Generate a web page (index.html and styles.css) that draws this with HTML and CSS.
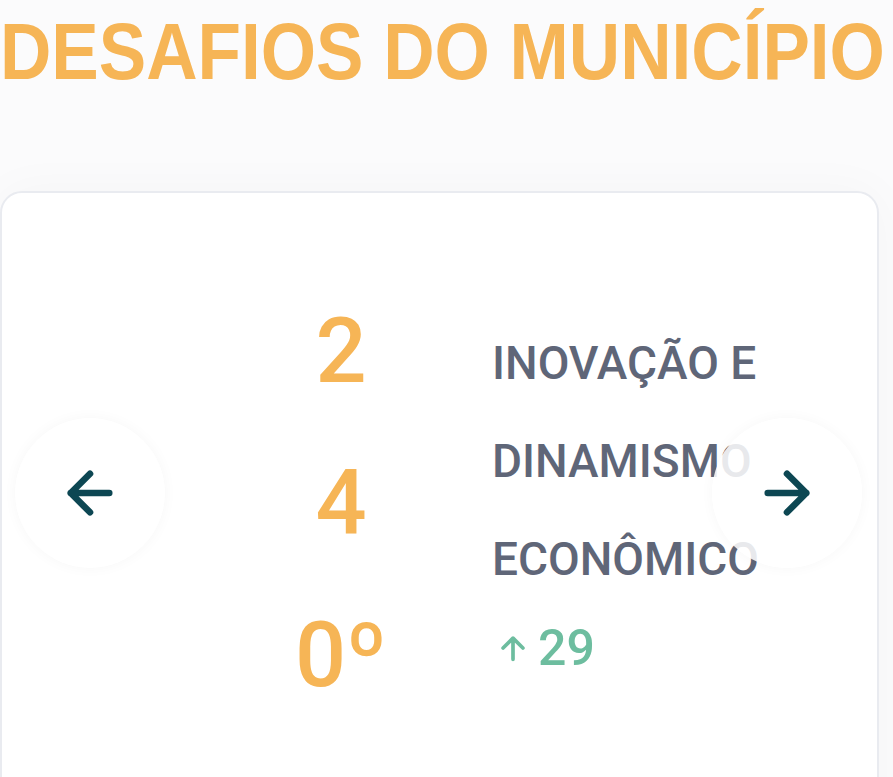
FILE: index.html
```html
<!DOCTYPE html>
<html lang="pt-BR">
<head>
    <meta charset="UTF-8">
    <meta name="viewport" content="width=device-width, initial-scale=1.0">
    <title>Desafios do Município</title>
    <link rel="stylesheet" href="styles.css">
</head>
<body>
    <h1 class="page-title"><span>DESAFIOS DO MUNICÍPIO</span></h1>

    <div class="challenge-card">
        <button class="nav-btn nav-prev" aria-label="Anterior">
            <svg viewBox="0 0 24 24" fill="none">
                <path d="M19 12H5M12 19l-7-7 7-7" stroke="#0d4753" stroke-width="2.4" stroke-linecap="round" stroke-linejoin="round"/>
            </svg>
        </button>

        <div class="challenge">
            <div class="rank">
                <span>2</span>
                <span>4</span>
                <span>0º</span>
            </div>
            <div class="info">
                <p class="name">INOVAÇÃO E DINAMISMO ECONÔMICO</p>
                <p class="change">
                    <svg viewBox="0 0 24 24" fill="none">
                        <path d="M12 20V5M5 12l7-7 7 7" stroke="#6dbd9f" stroke-width="2.6" stroke-linecap="round" stroke-linejoin="round"/>
                    </svg>
                    29
                </p>
            </div>
        </div>

        <button class="nav-btn nav-next" aria-label="Próximo">
            <svg viewBox="0 0 24 24" fill="none">
                <path d="M5 12h14M12 5l7 7-7 7" stroke="#0d4753" stroke-width="2.4" stroke-linecap="round" stroke-linejoin="round"/>
            </svg>
        </button>
    </div>
</body>
</html>
```

FILE: styles.css
```css
:root {
    --orange: #f6b556;
    --slate: #5f6678;
    --green: #6dbd9f;
    --teal: #0d4753;
    --border: #e9ebf0;
}

* {
    margin: 0;
    padding: 0;
    box-sizing: border-box;
}

html, body {
    height: 777px;
    overflow: hidden;
}

body {
    font-family: Roboto, 'Liberation Sans', sans-serif;
    background: #fbfbfc;
}

.page-title {
    font-family: 'Liberation Sans', Arial, sans-serif;
    font-weight: 700;
    font-size: 79px;
    line-height: 1;
    color: var(--orange);
    padding-top: 12px;
    white-space: nowrap;
    margin-bottom: 100px;
}

.page-title span {
    display: inline-block;
    transform: scaleX(0.9);
    transform-origin: left center;
}

.challenge-card {
    position: relative;
    width: 879px;
    height: 700px;
    background: #fff;
    border: 2px solid var(--border);
    border-radius: 22px;
    box-shadow: 0 0 50px rgba(0, 0, 0, 0.03);
}

.challenge {
    display: flex;
    align-items: flex-start;
    padding-top: 83px;
    padding-left: 294px;
}

.rank {
    display: flex;
    flex-direction: column;
    align-items: center;
    width: 90px;
    font-size: 90px;
    font-weight: 500;
    line-height: 152px;
    color: var(--orange);
}

.info {
    margin-left: 106px;
    margin-top: 38px;
}

.name {
    width: 280px;
    font-size: 46px;
    font-weight: 500;
    line-height: 98px;
    color: var(--slate);
}

.change {
    display: flex;
    align-items: center;
    gap: 8px;
    font-size: 50px;
    font-weight: 500;
    color: var(--green);
    line-height: 80px;
    margin-left: 4px;
}

.change svg {
    width: 34px;
    height: 34px;
}

.nav-btn {
    position: absolute;
    top: 225px;
    width: 150px;
    height: 150px;
    border: none;
    border-radius: 50%;
    background: #fff;
    box-shadow: 0 0 14px rgba(0, 0, 0, 0.035);
    display: flex;
    align-items: center;
    justify-content: center;
    cursor: pointer;
}

.nav-btn svg {
    width: 66px;
    height: 66px;
}

.nav-prev {
    left: 13px;
}

.nav-next {
    left: 710px;
    background: rgba(255, 255, 255, 0.86);
}
```
